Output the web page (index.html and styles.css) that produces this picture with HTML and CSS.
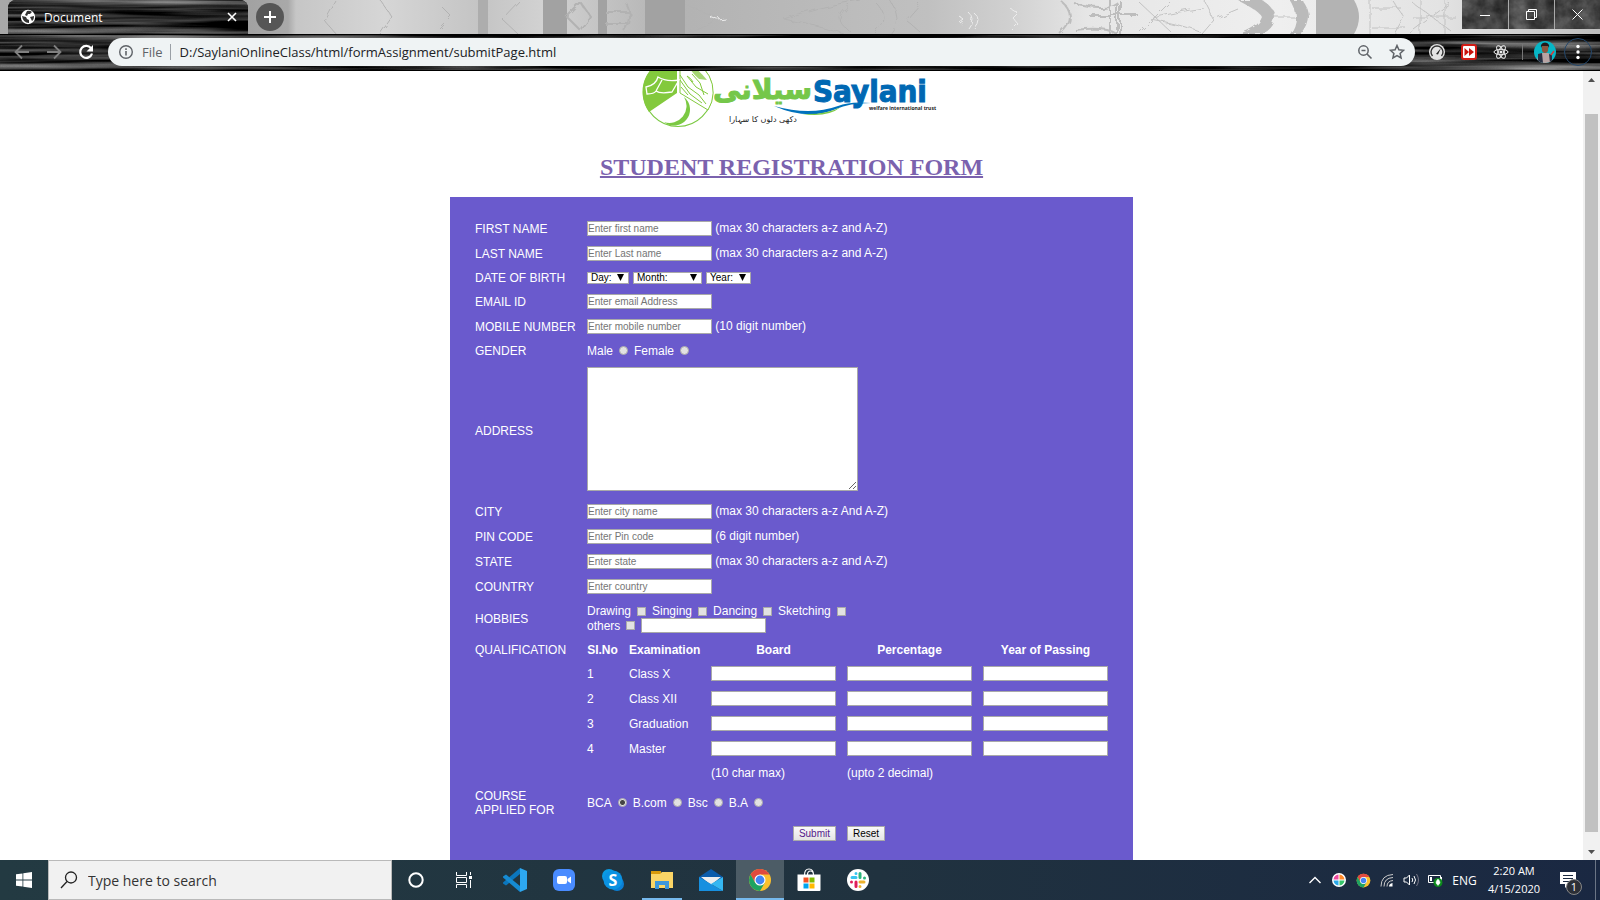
FILE: index.html
```html
<!DOCTYPE html>
<html lang="en">
<head>
<meta charset="utf-8">
<title>Document</title>
<link rel="stylesheet" href="styles.css">
</head>
<body>
<svg class="defs" width="0" height="0" aria-hidden="true">
  <defs>
    <filter id="wood" x="0" y="0" width="100%" height="100%" color-interpolation-filters="sRGB">
      <feTurbulence type="fractalNoise" baseFrequency="0.005 0.14" numOctaves="3" seed="8"/>
      <feColorMatrix values="1.2 0 0 0 -.46  1.2 0 0 0 -.46  1.2 0 0 0 -.46  0 0 0 0 1"/>
    </filter>
    <filter id="stone" x="0" y="0" width="100%" height="100%" color-interpolation-filters="sRGB">
      <feTurbulence type="fractalNoise" baseFrequency="0.06" numOctaves="4" seed="4"/>
      <feColorMatrix values=".4 0 0 0 .07  .4 0 0 0 .07  .4 0 0 0 .07  0 0 0 0 1"/>
    </filter>
    <filter id="branches" x="0" y="0" width="100%" height="100%">
      <feTurbulence type="fractalNoise" baseFrequency="0.09" numOctaves="3" seed="2"/>
      <feDisplacementMap in="SourceGraphic" scale="7"/>
    </filter>
    <symbol id="chrome" viewBox="0 0 24 24">
      <circle cx="12" cy="12" r="11" fill="#fbc02d"/>
      <path d="M2.5 6.5A11 11 0 0 1 21.5 6.5H12L7.2 14.8Z" fill="#e04a3f"/>
      <path d="M2.5 6.5L7.2 14.8 12 17.5 16.8 14.8 12 23A11 11 0 0 1 2.5 6.5Z" fill="#1ea362"/>
      <circle cx="12" cy="12" r="5.5" fill="#fff"/><circle cx="12" cy="12" r="4.4" fill="#4285f4"/>
    </symbol>
  </defs>
</svg>

<header class="browser">
  <div class="tabstrip">
    <svg class="backdrop" preserveAspectRatio="none" viewBox="0 0 1600 34" aria-hidden="true">
      <defs>
        <linearGradient id="fog">
          <stop offset="0" stop-color="#a8a8a8"/><stop offset=".15" stop-color="#a0a0a0"/><stop offset=".18" stop-color="#a9a9a9"/><stop offset=".185" stop-color="#c6c6c6"/>
          <stop offset=".24" stop-color="#d6d6d6"/><stop offset=".3" stop-color="#c4c4c4"/><stop offset=".34" stop-color="#d2d2d2"/><stop offset=".42" stop-color="#b2b2b2"/>
          <stop offset=".58" stop-color="#c0c0c0"/><stop offset=".63" stop-color="#d0d0d0"/><stop offset=".68" stop-color="#e6e6e6"/><stop offset=".8" stop-color="#efefef"/><stop offset=".9" stop-color="#e3e3e3"/><stop offset="1" stop-color="#bdbdbd"/>
        </linearGradient>
      </defs>
      <rect width="1600" height="34" fill="url(#fog)"/>
      <path d="M543 0h24v34h-24zM645 0h40v34h-40zM598 0h9v34h-9z" fill="#a2a2a2"/>
      <path d="M478 0h10v34h-10z" fill="#adadad"/>
      <path d="M1316 0h38q10 17 0 34h-38z" fill="#b3b3b3"/>
      <g filter="url(#branches)">
      <path d="M1238 0Q1258 10 1262 17 1258 28 1238 34H1262Q1275 28 1275 17 1275 8 1262 0ZM1290 0q12 17 0 34h12q14-17 0-34z" fill="#bababa"/>
      <g fill="none" stroke="#b2b2b2">
        <path d="M567 17l14-14 10 14-10 14zM605 12h24M605 24h24M625 2q10 15 0 30" stroke-width="2"/>
        <path d="M335 0l-11 20 12 14M520 0l-18 19 16 15M685 4l34 15-30 13M380 0l12 17-12 17M440 5l12 12-12 12"/>
        <path d="M860 0q-50 8-76 19 32 6 60 15M850 5q-20 14 0 26M875 2q18 16 0 31M890 0q14 20 0 34M920 4l-14 16 14 12"/>
        <path d="M1060 0q20 17 0 34M1075 4q30 8 42 0v30q-12-8-42-4M1110 0v34M1120 0v34M1088 15h50" stroke="#bdbdbd" stroke-width="2"/>
        <path d="M1204 0l10 20-12 14M1204 8q-30 4-54 11 30 5 50 13M1214 19l24-10M1275 17h20M1392 0l12 17-10 17M1372 8h30M1372 28h34M1412 2l40 30M1450 3l-40 30M1412 17h44M1420 0v34M1445 0v34M1140 3l30 28M1170 2l-30 30M1370 0v34" stroke="#c2c2c2"/>
      </g>
      </g>
      <path d="M968 12q8 6 0 16M974 13q8 6 0 15M960 17l4 3-4 3M1010 8l8 5-5 5 6 7-6 6M710 17l8 3 8-1" fill="none" stroke="#ececec" filter="url(#branches)"/>
    </svg>
    <div class="tab">
      <svg class="backdrop" aria-hidden="true"><rect width="100%" height="100%" filter="url(#wood)"/></svg>
      <svg class="ico" width="16" height="16" viewBox="0 0 16 16"><circle cx="8" cy="8" r="7.2" fill="#fff"/><path d="M2 7l4 1 1 2 2 1v3q-6 0-7-7zM7 2q3-1 5 1l-2 2-2 0-1 2-2-1zM10 8l4-1q0 4-2 5l-1-2z" fill="#333"/></svg>
      <span class="tab-title">Document</span>
      <button class="tab-close" aria-label="Close tab"><svg width="10" height="10" viewBox="0 0 10 10"><path d="M1 1l8 8M9 1l-8 8" stroke="#fff" stroke-width="1.6"/></svg></button>
    </div>
    <button class="new-tab" aria-label="New tab"><svg width="14" height="14" viewBox="0 0 14 14"><path d="M7 1v12M1 7h12" stroke="#fff" stroke-width="2"/></svg></button>
    <div class="window-buttons">
      <svg class="backdrop" aria-hidden="true"><rect width="100%" height="100%" filter="url(#stone)"/></svg>
      <button aria-label="Minimize"><svg width="10" height="10"><path d="M0 5.5h10" stroke="#fff"/></svg></button>
      <button aria-label="Restore"><svg width="11" height="11"><path d="M.5 2.5h8v8h-8zM2.500 2.500v-2h8v8h-2" fill="none" stroke="#fff"/></svg></button>
      <button aria-label="Close"><svg width="11" height="11"><path d="M.5.5l10 10M10.500.5l-10 10" stroke="#fff"/></svg></button>
    </div>
  </div>

  <div class="toolbar">
    <svg class="backdrop" aria-hidden="true"><rect width="100%" height="100%" filter="url(#wood)"/></svg>
    <div class="nav">
      <button aria-label="Back"><svg width="16" height="16" viewBox="0 0 16 16"><path d="M15 8H2M8 1.500L1.500 8 8 14.500" fill="none" stroke="#808080" stroke-width="1.800"/></svg></button>
      <button aria-label="Forward"><svg width="16" height="16" viewBox="0 0 16 16"><path d="M1 8h13M8 1.500L14.500 8 8 14.500" fill="none" stroke="#808080" stroke-width="1.800"/></svg></button>
      <button aria-label="Reload"><svg width="16" height="16" viewBox="0 0 16 16"><path d="M13 4.200A6 6 0 1 0 14 9.500" fill="none" stroke="#fff" stroke-width="2.200"/><path d="M15 1v6.500H8.500z" fill="#fff"/></svg></button>
    </div>
    <div class="omnibox">
      <svg class="ico" width="16" height="16" viewBox="0 0 16 16"><circle cx="8" cy="8" r="6.300" fill="none" stroke="#5f6368" stroke-width="1.400"/><path d="M8 7v4.500M8 4.300v1.600" stroke="#5f6368" stroke-width="1.600"/></svg>
      <span class="scheme">File</span>
      <input class="url" aria-label="Address" value="D:/SaylaniOnlineClass/html/formAssignment/submitPage.html">
      <button aria-label="Zoom"><svg width="16" height="16" viewBox="0 0 16 16"><circle cx="6.500" cy="6.500" r="4.700" fill="none" stroke="#5f6368" stroke-width="1.500"/><path d="M10 10l4.500 4.500M4.500 6.500h4" stroke="#5f6368" stroke-width="1.600"/></svg></button>
      <button aria-label="Bookmark"><svg width="16" height="16" viewBox="0 0 16 16"><path d="M8 1.500l1.900 4.300 4.700.5-3.500 3.100 1 4.600L8 11.600 3.900 14l1-4.600L1.400 6.300l4.700-.5z" fill="none" stroke="#5f6368" stroke-width="1.500"/></svg></button>
    </div>
    <div class="extensions">
      <button aria-label="Speed test"><svg width="18" height="18" viewBox="0 0 18 18"><circle cx="9" cy="9" r="8" fill="#e4e4e4"/><path d="M4.500 13A6 6 0 1 1 13.500 13" fill="none" stroke="#333" stroke-width="1.400"/><path d="M8 11l5-6-3 6.500z" fill="#222"/></svg></button>
      <button aria-label="Video speed"><svg width="16" height="16" viewBox="0 0 16 16"><rect width="16" height="16" rx="3" fill="#d21c16"/><rect x="2" y="2" width="12" height="12" rx="1" fill="#fff"/><path d="M3.500 4l4.500 4-4.500 4zM8 4l5 4-5 4z" fill="#c9140e"/></svg></button>
      <button aria-label="React tools"><svg width="16" height="16" viewBox="0 0 16 16"><g fill="none" stroke="#eee"><ellipse cx="8" cy="8" rx="7" ry="2.700"/><ellipse cx="8" cy="8" rx="7" ry="2.700" transform="rotate(60 8 8)"/><ellipse cx="8" cy="8" rx="7" ry="2.700" transform="rotate(120 8 8)"/></g><circle cx="8" cy="8" r="1.500" fill="#eee"/></svg></button>
      <span class="divider"></span>
      <button class="profile" aria-label="Profile"><svg width="22" height="22" viewBox="0 0 22 22"><clipPath id="av"><circle cx="11" cy="11" r="11"/></clipPath><g clip-path="url(#av)"><rect width="22" height="22" fill="#07b6c6"/><path d="M3 22q0-9 5-10h6q5 1 4 10z" fill="#b8a4a4"/><path d="M4 13l4-1 1 10H4zM15 13l3 1v8h-2z" fill="#273044"/><ellipse cx="11" cy="7.500" rx="3.200" ry="4.500" fill="#8a563e"/><path d="M7 7q-1-5 4-5.500 5 .5 4 5.500l-1-2H8z" fill="#231b1b"/><path d="M17 14l3-4" stroke="#d63c3c" stroke-width="1.500"/></g></svg></button>
      <button class="menu" aria-label="Menu"><svg width="4" height="16"><circle cx="2" cy="2.500" r="1.700" fill="#fff"/><circle cx="2" cy="8" r="1.700" fill="#fff"/><circle cx="2" cy="13.500" r="1.700" fill="#fff"/></svg></button>
    </div>
  </div>
</header>

<div class="viewport">
<main class="page">
  <svg class="logo" width="300" height="58" viewBox="0 0 300 58" role="img" aria-label="Saylani Welfare International Trust">
    <circle cx="36" cy="21" r="34.500" fill="#fff" stroke="#7bc943" stroke-width="1.200"/>
    <path d="M35-13V22L7 41A34 34 0 0 1 35-13Z" fill="#83c93d"/>
    <path d="M38-13A34 34 0 0 1 66 39L38 22Z" fill="#fff" stroke="#83c93d"/>
    <path d="M4 16q10-2 12-10 8 5 21 3l-7 12q-12 2-16-1-2 3-9 3zM14 20l6-11" fill="none" stroke="#fff" stroke-width="1.300"/>
    <path d="M50-5q8 5 15 14l-8-1q-6-5-8-9z" fill="#a4d672"/>
    <path d="M38 4l8 12 11 8 7 9M38 9l10 14 12 9M45 5l9 11 12 7M50 3l8 9 4 12M39 16l7 8M45 5q4 2 6 6" fill="none" stroke="#83c93d"/>
    <path d="M22 51A14 14 0 1 0 42 26 17 17 0 0 1 22 51Z" fill="#7bc943"/>
    <text x="71" y="28" class="logo-urdu">سیلانی</text>
    <text x="171" y="31" class="logo-name">Saylani</text>
    <path d="M132 35q36 10 64 0 12-5 33-3-22 0-35 6-28 12-62-3z" fill="#0071bc"/>
    <path d="M160 43q24 1 39-7-14 11-39 7z" fill="#7bc943"/>
    <text x="227" y="39" class="logo-sub">welfare international trust</text>
    <text x="87" y="51" class="logo-tag">دکھی دلوں کا سہارا</text>
  </svg>
  <h1>STUDENT REGISTRATION FORM</h1>

  <form class="card" onsubmit="return false">
    <table>
      <colgroup><col class="c-label"><col class="c-no"><col class="c-exam"><col class="c-field"><col class="c-field"><col class="c-field"></colgroup>
      <tr><td><label for="fn">FIRST NAME</label></td><td colspan="5"><input id="fn" type="text" placeholder="Enter first name"> (max 30 characters a-z and A-Z)</td></tr>
      <tr><td><label for="ln">LAST NAME</label></td><td colspan="5"><input id="ln" type="text" placeholder="Enter Last name"> (max 30 characters a-z and A-Z)</td></tr>
      <tr class="short"><td>DATE OF BIRTH</td><td colspan="5"><div class="dob"><select class="day" aria-label="Day"><option>Day:</option></select><select class="month" aria-label="Month"><option>Month:</option></select><select class="year" aria-label="Year"><option>Year:</option></select></div></td></tr>
      <tr><td><label for="em">EMAIL ID</label></td><td colspan="5"><input id="em" type="text" placeholder="Enter email Address"></td></tr>
      <tr><td><label for="mo">MOBILE NUMBER</label></td><td colspan="5"><input id="mo" type="text" placeholder="Enter mobile number"> (10 digit number)</td></tr>
      <tr class="short"><td>GENDER</td><td colspan="5"><div class="choices"><label>Male <input type="radio" name="gender"></label><label>Female <input type="radio" name="gender"></label></div></td></tr>
      <tr class="address"><td><label for="ad">ADDRESS</label></td><td colspan="5"><textarea id="ad"></textarea></td></tr>
      <tr><td><label for="ci">CITY</label></td><td colspan="5"><input id="ci" type="text" placeholder="Enter city name"> (max 30 characters a-z And A-Z)</td></tr>
      <tr><td><label for="pi">PIN CODE</label></td><td colspan="5"><input id="pi" type="text" placeholder="Enter Pin code"> (6 digit number)</td></tr>
      <tr><td><label for="st">STATE</label></td><td colspan="5"><input id="st" type="text" placeholder="Enter state"> (max 30 characters a-z and A-Z)</td></tr>
      <tr><td><label for="co">COUNTRY</label></td><td colspan="5"><input id="co" type="text" placeholder="Enter country"></td></tr>
      <tr class="hobbies"><td>HOBBIES</td><td colspan="5">
        <div class="choices"><label>Drawing <input type="checkbox"></label><label>Singing <input type="checkbox"></label><label>Dancing <input type="checkbox"></label><label>Sketching <input type="checkbox"></label></div>
        <div class="choices others"><label>others <input type="checkbox"></label><input type="text" aria-label="Other hobbies"></div></td></tr>
      <tr class="short"><td>QUALIFICATION</td><th>SI.No</th><th>Examination</th><th>Board</th><th>Percentage</th><th>Year of Passing</th></tr>
      <tr><td></td><td>1</td><td>Class X</td><td><input type="text" aria-label="Class X board"></td><td><input type="text" aria-label="Class X percentage"></td><td><input type="text" aria-label="Class X year"></td></tr>
      <tr><td></td><td>2</td><td>Class XII</td><td><input type="text" aria-label="Class XII board"></td><td><input type="text" aria-label="Class XII percentage"></td><td><input type="text" aria-label="Class XII year"></td></tr>
      <tr><td></td><td>3</td><td>Graduation</td><td><input type="text" aria-label="Graduation board"></td><td><input type="text" aria-label="Graduation percentage"></td><td><input type="text" aria-label="Graduation year"></td></tr>
      <tr><td></td><td>4</td><td>Master</td><td><input type="text" aria-label="Master board"></td><td><input type="text" aria-label="Master percentage"></td><td><input type="text" aria-label="Master year"></td></tr>
      <tr class="short"><td></td><td></td><td></td><td>(10 char max)</td><td>(upto 2 decimal)</td><td></td></tr>
      <tr class="course"><td>COURSE<br>APPLIED FOR</td><td colspan="5"><div class="choices"><label>BCA <input type="radio" name="course" checked></label><label>B.com <input type="radio" name="course"></label><label>Bsc <input type="radio" name="course"></label><label>B.A <input type="radio" name="course"></label></div></td></tr>
      <tr><td></td><td></td><td></td><td class="right"><button class="btn submit" type="submit">Submit</button></td><td><button class="btn" type="reset">Reset</button></td><td></td></tr>
    </table>
  </form>
</main>
<div class="scrollbar">
  <button aria-label="Scroll up"><svg width="7" height="4"><path d="M3.500 0L7 4H0z" fill="#505050"/></svg></button>
  <div class="track"><div class="thumb"></div></div>
  <button aria-label="Scroll down"><svg width="7" height="4"><path d="M3.500 4L7 0H0z" fill="#505050"/></svg></button>
</div>
</div>

<footer class="taskbar">
  <button class="task" aria-label="Start"><svg width="16" height="16" viewBox="0 0 16 16"><path d="M0 2.300L6.500 1.400V7.500H0zM7.300 1.300L16 0V7.500H7.300zM0 8.400H6.500V14.600L0 13.700zM7.300 8.400H16V16L7.300 14.800z" fill="#fff"/></svg></button>
  <label class="search">
    <svg width="18" height="18" viewBox="0 0 18 18"><circle cx="11" cy="6.500" r="5.500" fill="none" stroke="#222" stroke-width="1.300"/><path d="M7 10.500L1 17" stroke="#222" stroke-width="1.300"/></svg>
    <input type="text" placeholder="Type here to search" aria-label="Search">
  </label>
  <button class="task" aria-label="Cortana"><svg width="18" height="18"><circle cx="9" cy="9" r="6.700" fill="none" stroke="#fff" stroke-width="2"/></svg></button>
  <button class="task" aria-label="Task view"><svg width="18" height="16" viewBox="0 0 18 16"><path d="M1.500 0v3.500h10V0M1.500 16v-3.500h10V16M1.500 5.500h10v5h-10zM15.500 0v3M15.500 8v8" fill="none" stroke="#fff"/><path d="M14 4h3v3h-3z" fill="#fff"/></svg></button>
  <div class="apps">
    <button class="task" aria-label="Visual Studio Code"><svg width="24" height="24" viewBox="0 0 24 24"><path d="M17 0l7 3v18l-7 3z" fill="#2da7f0"/><path d="M17 0v6L3 17.500 0 15.500v-1z" fill="#0b76bd"/><path d="M17 24v-6L3 6.500 0 8.500v1z" fill="#168bd3"/></svg></button>
    <button class="task" aria-label="Zoom"><svg width="24" height="24" viewBox="0 0 24 24"><rect x="1" y="1" width="22" height="22" rx="6" fill="#4a8cff"/><rect x="5" y="8" width="10" height="8" rx="2" fill="#fff"/><path d="M15.500 11l3.500-2.500v7L15.500 13z" fill="#fff"/></svg></button>
    <button class="task" aria-label="Skype"><svg width="24" height="24" viewBox="0 0 24 24"><circle cx="8" cy="8" r="7" fill="#0a9be3"/><circle cx="16" cy="16" r="7" fill="#0a7fd6"/><circle cx="12" cy="12" r="9.500" fill="#0b92e2"/><text x="12" y="18" class="skype-s">S</text></svg></button>
    <button class="task open" aria-label="File Explorer"><svg width="24" height="24" viewBox="0 0 24 24"><path d="M1 3h10v4H1z" fill="#d99a0b"/><path d="M1 6h9l2-2h11v16H1z" fill="#fbd566"/><path d="M5 21v-8h14v8h-4v-4H9v4z" fill="#3d97dc"/></svg></button>
    <button class="task" aria-label="Mail"><svg width="24" height="24" viewBox="0 0 24 24"><path d="M0 9L12 1l12 8v4H0z" fill="#0b5cab"/><path d="M2 9h20L12 17z" fill="#eee"/><path d="M0 9l24 14H0z" fill="#1790e0"/><path d="M24 9L12 16l12 7z" fill="#35b7f2"/></svg></button>
    <button class="task active" aria-label="Chrome"><svg width="24" height="24"><use href="#chrome"/></svg></button>
    <button class="task" aria-label="Store"><svg width="24" height="24" viewBox="0 0 24 24"><path d="M7.500 7q0-6 4.500-6t4.500 6M10.500 7q0-4 3-4t3 4" fill="none" stroke="#fff" stroke-width="1.200"/><path d="M.5 6.500h23V22q0 1-1 1h-21q-1 0-1-1z" fill="#fff"/><path d="M6.500 9.500h5v5h-5z" fill="#f25022"/><path d="M12.500 9.500h5v5h-5z" fill="#7fba00"/><path d="M6.500 15.500h5v5h-5z" fill="#00a4ef"/><path d="M12.500 15.500h5v5h-5z" fill="#ffb900"/></svg></button>
    <button class="task" aria-label="Slack"><svg width="24" height="24" viewBox="0 0 24 24"><circle cx="12" cy="12" r="11" fill="#fff"/><g stroke-width="3" stroke-linecap="round"><path d="M10 5.500v.1M6 9.500h4" stroke="#36c5f0"/><path d="M14 5.500v4M18.500 10v.1" stroke="#2eb67d"/><path d="M14 14h4M14 18.500v.1" stroke="#ecb22e"/><path d="M10 14v4.500M5.500 14v.1" stroke="#e01e5a"/></g></svg></button>
  </div>
  <div class="tray">
    <button aria-label="Show hidden icons"><svg width="12" height="8"><path d="M.5 7L6 1.500 11.500 7" fill="none" stroke="#fff" stroke-width="1.400"/></svg></button>
    <button aria-label="Color picker"><svg width="14" height="14" viewBox="0 0 14 14"><circle cx="7" cy="7" r="7" fill="#fff"/><path d="M6.500 1.500v5h-5a6 6 0 0 1 5-5z" fill="#ef4aa0"/><path d="M7.500 1.500v5h5a6 6 0 0 0-5-5z" fill="#ff8a2a"/><path d="M6.500 12.500v-5h-5a6 6 0 0 0 5 5z" fill="#2aa8e8"/><path d="M7.500 12.500v-5h5a6 6 0 0 1-5 5z" fill="#35c46a"/></svg></button>
    <button aria-label="Chrome"><svg width="15" height="15"><use href="#chrome"/></svg></button>
    <button aria-label="Network"><svg width="14" height="14" viewBox="0 0 14 14"><g fill="none" stroke="#ccc"><path d="M1 13.500Q1 2 13 1.500M4 13.500Q4 5 13 4.500M7 13.500Q7 8 13 7.500"/></g><path d="M9 13.500q0-3 3.500-3.500v3.500z" fill="#fff"/></svg></button>
    <button aria-label="Volume"><svg width="17" height="14" viewBox="0 0 17 14"><path d="M1 5h2.500l3-3v10l-3-3H1z" fill="none" stroke="#fff"/><path d="M9 5q1.500 2 0 4M11 3q3 4 0 8" fill="none" stroke="#fff"/><path d="M13.500 1q4 6 0 12" fill="none" stroke="#778"/></svg></button>
    <button aria-label="Battery"><svg width="16" height="14" viewBox="0 0 16 14"><path d="M1.500 2.500h12v7h-12zM14.500 4v4" fill="none" stroke="#fff"/><path d="M3 4h2v4H3z" fill="#fff"/><circle cx="11" cy="9.500" r="4.500" fill="#0c8a1b"/><path d="M11 6q4 4 0 6-4-2 0-6zM11 9v4" fill="#fff" stroke="#fff" stroke-width=".5"/></svg></button>
    <button class="lang">ENG</button>
    <button class="clock"><span>2:20 AM</span><span>4/15/2020</span></button>
    <button class="notify" aria-label="Notifications"><svg width="16" height="16" viewBox="0 0 16 16"><path d="M0 0h16v12H9l-4 4v-4H0z" fill="#fff"/><path d="M3 3.500h10M3 6.500h10M3 9.500h7" stroke="#1b2a41"/></svg><span class="badge">1</span></button>
    <span class="desktop-edge"></span>
  </div>
</footer>
</body>
</html>
```
FILE: styles.css
```css
* { box-sizing: border-box; }
body {
  margin: 0;
  height: 100vh;
  display: flex;
  flex-direction: column;
  overflow: hidden;
  background: #fff;
  font-family: "Open Sans", "Noto Sans", sans-serif;
}
button { border: 0; padding: 0; background: none; color: inherit; font: inherit; display: flex; align-items: center; justify-content: center; }
svg { flex: none; display: block; }
.defs { position: absolute; }
.backdrop { position: absolute; left: 0; top: 0; width: 100%; height: 100%; z-index: -1; }

/* Browser chrome */
.browser { flex: none; }
.tabstrip { position: relative; z-index: 0; display: flex; height: 34px; padding-left: 8px; }
.tab {
  position: relative;
  z-index: 0;
  display: flex;
  align-items: center;
  width: 240px;
  padding: 0 11px 0 12px;
  border-radius: 8px 8px 0 0;
  overflow: hidden;
  background: #111;
  color: #fff;
  font-size: 12px;
}
.tab-title { flex: 1; padding-left: 8px; }
.new-tab { width: 28px; height: 28px; margin: 3px 0 0 8px; border-radius: 50%; background: #565656; }
.window-buttons { position: relative; z-index: 0; display: flex; height: 29px; margin-left: auto; }
.window-buttons button { width: 46px; }
.window-buttons button + button { border-left: 1px solid #aaa; }

.toolbar { position: relative; z-index: 0; display: flex; align-items: center; height: 37px; padding: 3px 8px 4px 6px; border-top: 1px solid #000; border-bottom: 1px solid #000; background: #111; }
.nav { display: flex; width: 102px; }
.nav button { width: 32px; height: 28px; }
.omnibox { flex: 1; display: flex; align-items: center; height: 28px; padding: 0 10px; border-radius: 14px; background: #eff3f4; font-size: 13px; }
.omnibox button { width: 16px; margin-left: 16px; }
.scheme { margin-left: 8px; padding-right: 7px; border-right: 1px solid #9aa0a6; line-height: 16px; color: #5f6368; }
.url { flex: 1; border: 0; padding: 0 0 0 9px; background: none; outline: 0; font: inherit; color: #202124; }
.extensions { display: flex; align-items: center; padding-left: 6px; }
.extensions button { width: 32px; height: 28px; }
.divider { width: 1px; height: 16px; margin: 0 6px 0 5px; background: #777; }
.extensions .menu { width: 28px; margin-left: 3px; border: 1px solid #24476b; border-radius: 50%; }

/* Page */
.viewport { flex: 1; min-height: 0; display: flex; overflow: hidden; }
.page { flex: 1; min-width: 0; overflow: hidden; display: flex; flex-direction: column; align-items: center; }
.logo { overflow: hidden; }
.logo-urdu { font: bold 28px "DejaVu Sans", sans-serif; fill: #75c74a; stroke: #75c74a; stroke-width: 1px; }
.logo-name { font: bold 31px "DejaVu Sans Condensed", "DejaVu Sans", sans-serif; fill: #0068b3; stroke: #0068b3; stroke-width: 1px; }
.logo-sub { font: bold 5px "Open Sans", sans-serif; fill: #222; }
.logo-tag { font: 8px "DejaVu Sans", sans-serif; fill: #222; }
h1 { margin: 24px 0 16px; font: bold 24px/28px "Liberation Serif", serif; color: #7b62ae; text-decoration: underline; text-decoration-thickness: 2px; }
.card { flex: none; padding: 19px 20px 19px 19px; background: #6a5acd; color: #fff; font: 12px/14px "Liberation Sans", sans-serif; }
table { border-collapse: collapse; table-layout: fixed; width: 644px; }
.c-label { width: 112px; }
.c-no { width: 42px; }
.c-exam { width: 82px; }
.c-field { width: 136px; }
tr { height: 25px; }
td, th { padding: 0 5px 0 6px; text-align: left; white-space: nowrap; }
th { text-align: center; }
.short { height: 23px; }
.address { height: 137px; }
.address td + td { padding-top: 5px; vertical-align: top; }
.hobbies { height: 39px; }
.hobbies td + td { padding-top: 5px; vertical-align: top; }
.course { height: 37px; }
.right .btn { margin-left: auto; }
.card input[type="text"] { width: 125px; height: 15px; padding: 1px 0; border: 1px solid #a9a9a9; background: #fff; font: 10px/11px "Liberation Sans", sans-serif; vertical-align: middle; }
.card input::placeholder { color: #757575; }
textarea { display: block; width: 271px; height: 124px; border: 1px solid #a9a9a9; background: #fff; resize: both; }
.dob { display: flex; gap: 4px; }
select {
  appearance: none;
  height: 12px;
  padding: 0 3px;
  border: 1px solid #a9a9a9;
  border-radius: 0;
  color: #000;
  font: 10px/10px "Liberation Sans", sans-serif;
  background: #fff url("data:image/svg+xml,%3Csvg xmlns='http://www.w3.org/2000/svg' width='7' height='7'%3E%3Cpath d='M0 0h7L3.500 7z'/%3E%3C/svg%3E") no-repeat right 4px center;
}
.day { width: 42px; }
.month { width: 69px; }
.year { width: 45px; }
.choices { display: flex; align-items: center; gap: 6px; height: 14px; }
.choices label { display: flex; align-items: center; gap: 6px; }
.choices input[type="radio"], .choices input[type="checkbox"] { appearance: none; width: 9px; height: 9px; margin: 0; border: 1px solid #aaa; background: #e2e2e2; }
.choices input[type="radio"] { border-radius: 50%; }
.choices input[type="radio"]:checked { background: radial-gradient(#444 0 2px, #e2e2e2 3px); }
.others { height: 15px; }
.btn { height: 15px; padding: 0 5px; border: 1px solid #a9a9a9; background: linear-gradient(#fafafa, #e4e4e4); color: #000; font: 10px/12px "Liberation Sans", sans-serif; }
.submit { color: #551a8b; }

.scrollbar { width: 17px; display: flex; flex-direction: column; background: #f1f1f1; }
.scrollbar button { height: 17px; }
.track { flex: 1; padding: 26px 2px 11px; }
.thumb { height: 100%; background: #c1c1c1; }

/* Taskbar */
.taskbar { flex: none; display: flex; height: 40px; background: linear-gradient(90deg, #233a42, #20323f 55%, #1a2842); color: #fff; }
.task { width: 48px; height: 40px; }
.search { display: flex; align-items: center; gap: 10px; width: 344px; padding: 0 11px; border: 1px solid #b9b9b9; background: #f1f1f1; }
.search input { flex: 1; min-width: 0; border: 0; padding: 0; background: none; font: 14px "Open Sans", sans-serif; }
.search input::placeholder { color: #333; }
.apps { display: flex; gap: 1px; padding-left: 3px; }
.open { background: linear-gradient(#76b9ed, #76b9ed) no-repeat center bottom / 40px 2px; }
.active { background: #4c5c66; border-bottom: 2px solid #76b9ed; padding-top: 2px; }
.skype-s { font: bold 16px "Open Sans", sans-serif; fill: #fff; text-anchor: middle; }
.tray { display: flex; margin-left: auto; font-size: 11px; }
.tray button { width: 24px; }
.tray .lang { width: 35px; font-size: 12px; }
.tray .clock { width: 64px; flex-direction: column; line-height: 18px; }
.tray .notify { position: relative; width: 44px; }
.badge { position: absolute; left: 20px; top: 19px; width: 16px; height: 16px; border: 1px solid #888; border-radius: 50%; background: #2c2f36; font-size: 11px; line-height: 14px; text-align: center; }
.desktop-edge { width: 5px; margin-left: 5px; border-left: 1px solid #6b7585; }
```
